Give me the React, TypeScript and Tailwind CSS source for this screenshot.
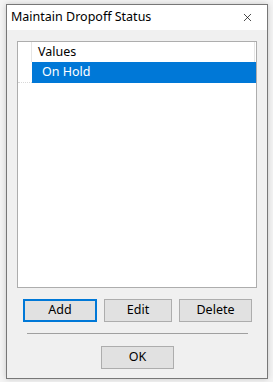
import { X } from 'lucide-react'

const font = { fontFamily: '"Noto Sans", "Segoe UI", Arial, sans-serif' }

function Btn({ label, focused, width }: { label: string; focused?: boolean; width: string }) {
  return (
    <button
      className={`${width} h-[23px] bg-[#e1e1e1] text-[12.5px] text-black flex items-center justify-center ${
        focused ? 'border-2 border-[#0078d7]' : 'border border-[#adadad]'
      }`}
    >
      {label}
    </button>
  )
}

export default function App() {
  return (
    <div className="w-[273px] h-[382px] bg-[#f4f4f4] pt-[4px] pl-[6px]" style={font}>
      <div className="w-[262px] h-[375px] border border-[#777777] bg-[#f0f0f0] flex flex-col shadow-[0_0_6px_rgba(0,0,0,0.18)]">
        {/* title bar */}
        <div className="h-[25px] bg-white flex items-center justify-between pl-[4px] pr-[13px]">
          <span className="text-[12.5px] text-black leading-none">Maintain Dropoff Status</span>
          <X size={13} strokeWidth={1.3} className="text-black" />
        </div>

        {/* list */}
        <div className="mt-[11px] ml-[10px] w-[240px] h-[247px] bg-white border border-[#adadad] flex flex-col">
          <div className="h-[20px] flex items-stretch">
            <div className="w-[14px] border-r border-[#e5e5e5]" />
            <div className="flex-1 flex items-center pl-[6px] text-[12.5px] text-black border-r border-[#e5e5e5] mr-[1px]">
              Values
            </div>
          </div>
          <div className="h-[21px] flex items-stretch">
            <div className="w-[14px] border-b border-dotted border-[#d8d8d8]" />
            <div className="flex-1 bg-[#0078d7] text-white text-[12.5px] flex items-center pl-[10px]">On Hold</div>
          </div>
        </div>

        {/* buttons */}
        <div className="mt-[11px] ml-[16px] flex gap-[7px]">
          <Btn label="Add" focused width="w-[74px]" />
          <Btn label="Edit" width="w-[68px]" />
          <Btn label="Delete" width="w-[73px]" />
        </div>

        <div className="mt-[11px] ml-[20px] w-[221px] h-px bg-[#a0a0a0]" />

        <div className="mt-[12px] ml-[94px]">
          <Btn label="OK" width="w-[73px]" />
        </div>
      </div>
    </div>
  )
}
